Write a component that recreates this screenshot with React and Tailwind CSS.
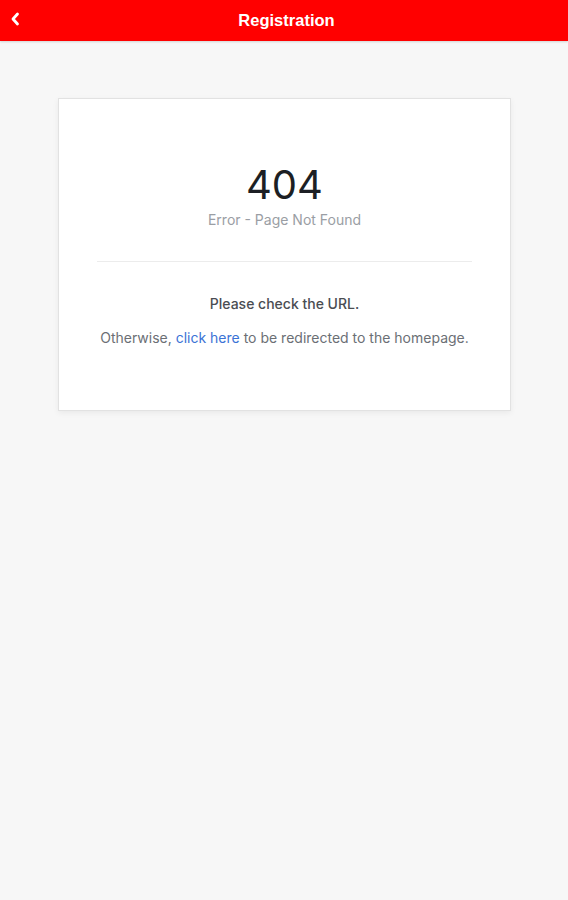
export default function App() {
  return (
    <div className="min-h-[900px] bg-[#f7f7f7]" style={{ fontFamily: "Inter, 'Liberation Sans', sans-serif" }}>
      <header className="relative flex h-[41px] items-center justify-center bg-[#ff0000] pl-[5px] shadow-[0_1px_2px_rgba(0,0,0,0.15)]">
        <button className="absolute left-[8px] top-[9px] flex h-[20px] w-[14px] items-center justify-center text-white">
          <svg width="10" height="14" viewBox="0 0 10 14" fill="none">
            <path d="M7.5 2 L3 7 L7.5 12" stroke="white" strokeWidth="2.8" strokeLinecap="round" strokeLinejoin="round" />
          </svg>
        </button>
        <h1 className="text-[16.5px] font-bold text-white" style={{ fontFamily: "'Liberation Sans', Arial, sans-serif" }}>Registration</h1>
      </header>
      <div className="pl-[58px] pr-[57px] pt-[57px]">
        <div className="border border-[#e2e2e2] bg-white px-[38px] pt-[63px] pb-[63px] text-center shadow-[0_2px_6px_rgba(0,0,0,0.06)]">
          <div className="text-[40px] leading-[46px] font-normal text-[#1c1f24]">404</div>
          <div className="mt-[3px] text-[14px] leading-[18px] text-[#9a9ea4]">Error - Page Not Found</div>
          <div className="mt-[32px] h-px bg-[#ececec]" />
          <p className="mt-[33px] text-[14px] leading-[18px] font-medium text-[#4a4d52]">Please check the URL.</p>
          <p className="mt-[16px] text-[14px] leading-[18px] text-[#6b6f75]">
            Otherwise, <a className="text-[#3b73d6]">click here</a> to be redirected to the homepage.
          </p>
        </div>
      </div>
    </div>
  );
}
